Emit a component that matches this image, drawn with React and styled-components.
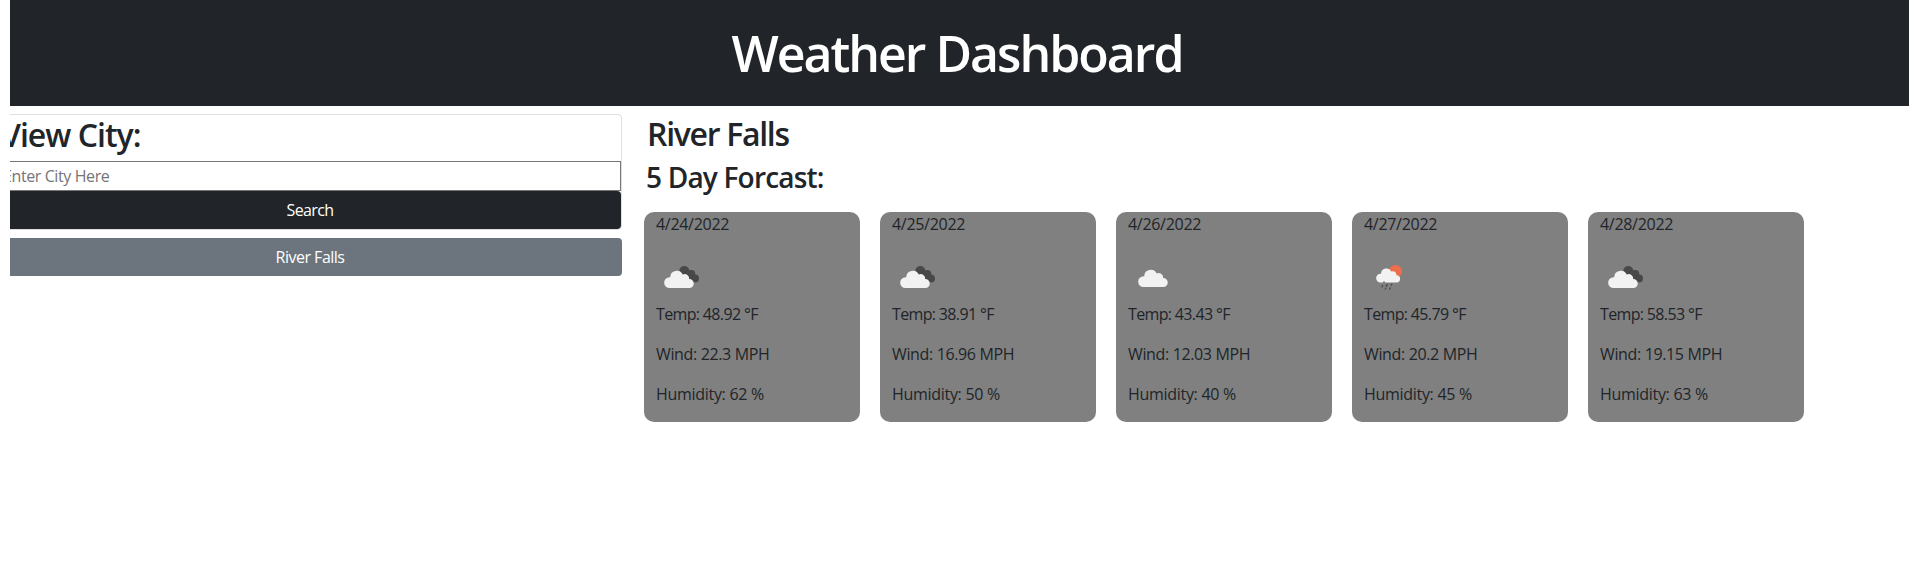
import React from "react";
import styled, { createGlobalStyle } from "styled-components";

const GlobalStyle = createGlobalStyle`
  *, *::before, *::after { box-sizing: border-box; }
  body {
    margin: 0;
    background: #fff;
    color: #212529;
    font-family: "Open Sans", "Noto Sans", sans-serif;
    font-size: 16px;
    line-height: 24px;
    overflow: hidden;
  }
`;

const Page = styled.div`
  margin-left: 10px;
  height: 585px;
  overflow: hidden;
`;

const Header = styled.header`
  height: 106px;
  padding: 23px 5px 0 0;
  background: #212529;
  color: #fff;
  text-align: center;
`;

const Title = styled.h1`
  margin: 0;
  font-size: 50px;
  line-height: 60px;
  font-weight: 600;
  letter-spacing: -2px;
`;

const Columns = styled.main`
  display: flex;
  align-items: flex-start;
  margin-left: -12px;
  padding-top: 8px;
`;

const Sidebar = styled.aside`
  flex: none;
  width: 624px;
`;

const SearchCard = styled.section`
  display: flex;
  flex-direction: column;
  height: 116px;
  border: 1px solid #dfdfdf;
  border-radius: 4px;
`;

const CardHeading = styled.h2`
  margin: 0 0 7px;
  padding-left: 2px;
  font-size: 32px;
  line-height: 39px;
  font-weight: 600;
  letter-spacing: -1px;
`;

const CityInput = styled.input`
  height: 30px;
  width: 100%;
  padding: 1px 3px;
  border: 1px solid #767676;
  border-radius: 0;
  background: #fff;
  font: inherit;
  letter-spacing: -0.4px;
  &::placeholder { color: #757575; opacity: 1; }
`;

const Button = styled.button`
  display: block;
  width: 100%;
  height: 38px;
  padding: 0 12px;
  border: 0;
  border-radius: 4px;
  background: ${(p) => (p.$muted ? "#6c757d" : "#212529")};
  color: #fff;
  font: inherit;
  letter-spacing: ${(p) => (p.$muted ? "-0.5px" : "-0.6px")};
  margin-top: ${(p) => (p.$muted ? "8px" : "0")};
`;

const Forecast = styled.section`
  flex: none;
  padding-left: 22px;
`;

const CityName = styled.h2`
  margin: 0 0 7px 3px;
  font-size: 32px;
  line-height: 39px;
  font-weight: 600;
  letter-spacing: -1.3px;
`;

const Subheading = styled.h3`
  margin: 0 0 18px 2px;
  font-size: 28px;
  line-height: 34px;
  font-weight: 600;
  letter-spacing: -0.8px;
`;

const Days = styled.div`
  display: flex;
  gap: 20px;
`;

const DayCard = styled.article`
  width: 216px;
  height: 210px;
  padding-left: 12px;
  border-radius: 10px;
  background: #808080;
`;

const Line = styled.p`
  margin: 0 0 16px;
  letter-spacing: ${(p) => p.$spacing || "-0.3px"};
`;

const Icon = styled.svg`
  display: block;
  width: 50px;
  height: 50px;
`;

const CLOUD =
  "M5.5 19 A5.4 5.4 0 0 1 5.6 8.2 L6.2 8.2 A6.6 6.6 0 0 1 18.8 5.6 A4.4 4.4 0 0 1 25.2 10 A4.5 4.5 0 0 1 25.3 19 Z";

function WeatherIcon({ kind }) {
  if (kind === "rain") {
    return (
      <Icon viewBox="0 0 50 50">
        <circle cx="31.5" cy="19.4" r="6.5" fill="#ec6e4c" />
        <path d={CLOUD} fill="#f2f2f2" transform="translate(12 15) scale(.81 .82)" />
        <g stroke="#484848" strokeWidth="1.3" strokeLinecap="round">
          <path d="M20 29.8v.5M18.6 33.6l-.6 1.2M23.2 32.4l-1 2M27.8 32.1l-.6 1M21.8 36.2l-.4.7M26.2 36l-.6 1" />
        </g>
      </Icon>
    );
  }
  if (kind === "cloud") {
    return (
      <Icon viewBox="0 0 50 50">
        <path d={CLOUD} fill="#f2f2f2" transform="translate(10 16)" />
      </Icon>
    );
  }
  return (
    <Icon viewBox="0 0 50 50">
      <g fill="#484848">
        <circle cx="28.3" cy="19" r="5" />
        <circle cx="35.3" cy="22.1" r="4" />
        <circle cx="39.1" cy="26.4" r="3.9" />
        <path d="M26 20 L34 19 L40 30.3 L34 29 Z" />
      </g>
      <path d={CLOUD} fill="#f2f2f2" transform="translate(8 17)" />
    </Icon>
  );
}

const DAYS = [
  { date: "4/24/2022", icon: "broken", temp: "48.92", wind: "22.3", humidity: 62 },
  { date: "4/25/2022", icon: "broken", temp: "38.91", wind: "16.96", humidity: 50 },
  { date: "4/26/2022", icon: "cloud", temp: "43.43", wind: "12.03", humidity: 40 },
  { date: "4/27/2022", icon: "rain", temp: "45.79", wind: "20.2", humidity: 45 },
  { date: "4/28/2022", icon: "broken", temp: "58.53", wind: "19.15", humidity: 63 },
];

export default function App() {
  return (
    <Page>
      <GlobalStyle />
      <Header>
        <Title>Weather Dashboard</Title>
      </Header>
      <Columns>
        <Sidebar>
          <SearchCard>
            <CardHeading>View City:</CardHeading>
            <CityInput placeholder="Enter City Here" />
            <Button>Search</Button>
          </SearchCard>
          <Button $muted>River Falls</Button>
        </Sidebar>
        <Forecast>
          <CityName>River Falls</CityName>
          <Subheading>5 Day Forcast:</Subheading>
          <Days>
            {DAYS.map((d) => (
              <DayCard key={d.date}>
                <Line>{d.date}</Line>
                <WeatherIcon kind={d.icon} />
                <Line $spacing="-0.65px">Temp: {d.temp} °F</Line>
                <Line $spacing="-0.36px">Wind: {d.wind} MPH</Line>
                <Line>Humidity: {d.humidity} %</Line>
              </DayCard>
            ))}
          </Days>
        </Forecast>
      </Columns>
    </Page>
  );
}
